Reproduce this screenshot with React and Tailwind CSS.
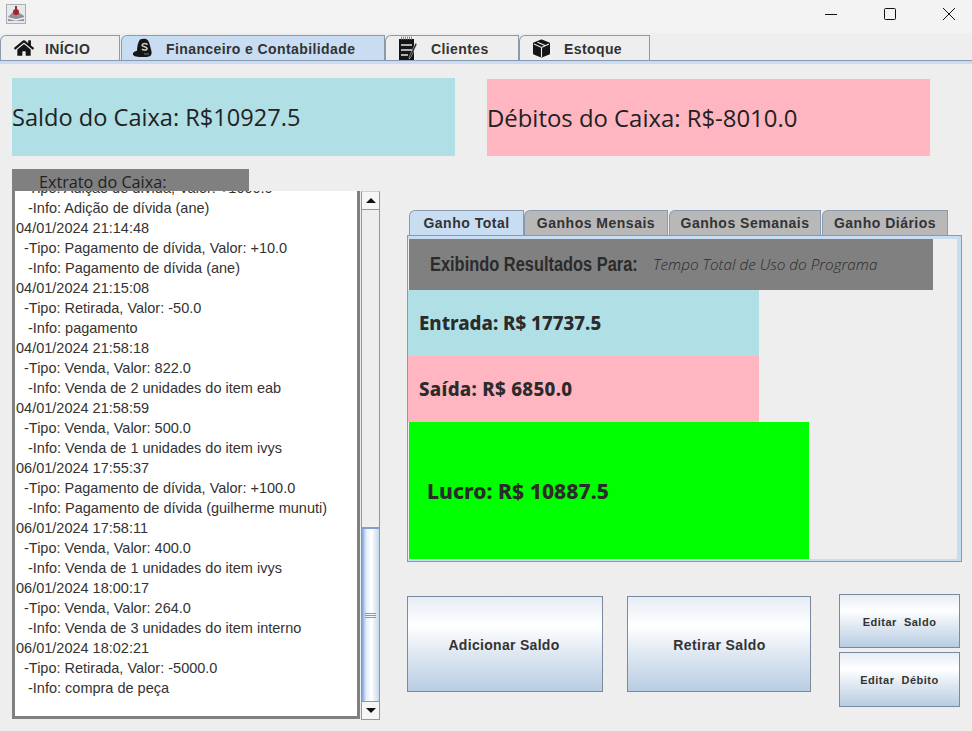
import React from "react";
import { FaHome } from "react-icons/fa";

const entries = [
  { date: "", tipo: "-Tipo: Adição de dívida, Valor: +1000.0", info: "-Info: Adição de dívida (ane)" },
  { date: "04/01/2024 21:14:48", tipo: "-Tipo: Pagamento de dívida, Valor: +10.0", info: "-Info: Pagamento de dívida (ane)" },
  { date: "04/01/2024 21:15:08", tipo: "-Tipo: Retirada, Valor: -50.0", info: "-Info: pagamento" },
  { date: "04/01/2024 21:58:18", tipo: "-Tipo: Venda, Valor: 822.0", info: "-Info: Venda de 2 unidades do item eab" },
  { date: "04/01/2024 21:58:59", tipo: "-Tipo: Venda, Valor: 500.0", info: "-Info: Venda de 1 unidades do item ivys" },
  { date: "06/01/2024 17:55:37", tipo: "-Tipo: Pagamento de dívida, Valor: +100.0", info: "-Info: Pagamento de dívida (guilherme munuti)" },
  { date: "06/01/2024 17:58:11", tipo: "-Tipo: Venda, Valor: 400.0", info: "-Info: Venda de 1 unidades do item ivys" },
  { date: "06/01/2024 18:00:17", tipo: "-Tipo: Venda, Valor: 264.0", info: "-Info: Venda de 3 unidades do item interno" },
  { date: "06/01/2024 18:02:21", tipo: "-Tipo: Retirada, Valor: -5000.0", info: "-Info: compra de peça" },
];

const metal = "bg-[linear-gradient(to_bottom,#e6edf5_0%,#ffffff_30%,#dfe8f2_60%,#b8cde3_100%)] border border-[#7a8a9e]";

function AppIcon() {
  return (
    <svg width="20" height="20" viewBox="0 0 20 20">
      <rect x="0.5" y="0.5" width="19" height="19" fill="#e8e8ea" stroke="#a9adb4" />
      <path d="M2 13 9 6l9 6v5H2z" fill="#8d929a" />
      <path d="M2 14l8 2 8-2" stroke="#f2f2f2" strokeWidth="1.5" fill="none" />
      <circle cx="10" cy="8" r="3" fill="#a8202c" />
      <rect x="9" y="2" width="2" height="4" fill="#7a3a40" />
    </svg>
  );
}

function BagIcon() {
  return (
    <svg width="22" height="20" viewBox="0 0 22 20">
      <path d="M8 1.5c3-1.5 7-1 8 1 2 3 2 6 3 9 1 3 1 6-2 7-3 .7-9 .7-13 0-3-.5-4-3-2-4.500 1-.7 2-1 3-1.200 0-4 1-9 3-11.300z" fill="#151515" />
      <path d="M10 7c1-2 5-2 5 0M10 7c0 2 5 1.500 5 3.500 0 2-4 2-5 .5" stroke="#c9c9c9" strokeWidth="1.600" fill="none" />
      <path d="M12 16h5" stroke="#777" strokeWidth="1" />
    </svg>
  );
}

function NoteIcon() {
  return (
    <svg width="20" height="25" viewBox="0 0 20 25">
      <rect x="1" y="3" width="15" height="21" fill="#151515" />
      <path d="M3 2h12" stroke="#8d8d8d" strokeDasharray="1 1" strokeWidth="3" />
      <path d="M3 9h11M3 14h11M3 19h7" stroke="#e4e4e4" strokeWidth="1.500" />
      <path d="M19 8l-6 13-2 2 .5-3 6-13z" fill="#151515" stroke="#eee" strokeWidth=".5" />
    </svg>
  );
}

function BoxIcon() {
  return (
    <svg width="19" height="19" viewBox="0 0 19 19">
      <path d="M9.500 1.500 17 4.500v10l-7.500 3-7.500-3v-10z" fill="#151515" stroke="#151515" strokeWidth="2" strokeLinejoin="round" />
      <path d="M2 5l7.500 3.500L17 5M9.500 8.500V18M5.500 3.200 13 6.500" stroke="#eee" strokeWidth="1.100" fill="none" />
    </svg>
  );
}

function Tab({ icon, label, active, className }) {
  return (
    <div
      className={`flex items-center h-[25px] border border-b-0 border-[#8a99ad] rounded-tl-[6px] text-[14px] font-bold tracking-[0.4px] text-[#333] ${active ? "bg-[#c8dcf2]" : "bg-[#eeeeee]"} ${className}`}
    >
      {icon}
      <span className="pt-[2px]">{label}</span>
    </div>
  );
}

function SubTab({ label, active, className }) {
  return (
    <div
      className={`flex items-center justify-center h-[25px] border border-b-0 border-[#8a99ad] rounded-tl-[6px] text-[14px] font-bold tracking-[0.5px] text-[#333] ${active ? "bg-[#c8dcf2]" : "bg-[#b8b8b8]"} ${className}`}
    >
      {label}
    </div>
  );
}

export default function App() {
  return (
    <div className="w-[972px] h-[731px] overflow-hidden bg-[#eeeeee] font-['Liberation_Sans',sans-serif] text-[#333]">
      {/* barra de titulo */}
      <div className="h-[33px] bg-[#f3f3f3] flex items-start justify-between">
        <div className="ml-[6px] mt-[4px]">
          <AppIcon />
        </div>
        <div className="flex mt-[6px] pr-[13px] gap-[39px] items-center">
          <svg width="20" height="16" viewBox="0 0 20 16"><path d="M4 8.500h12" stroke="#111" strokeWidth="1" /></svg>
          <svg width="20" height="16" viewBox="0 0 20 16"><rect x="4.500" y="2.500" width="11" height="11" rx="1" stroke="#111" strokeWidth="1" fill="none" /></svg>
          <svg width="20" height="16" viewBox="0 0 20 16"><path d="M4 2l12 12M16 2 4 14" stroke="#111" strokeWidth="1" /></svg>
        </div>
      </div>

      {/* abas principais */}
      <div className="h-[2px]" />
      <div className="flex items-end h-[25px] pl-0">
        <Tab className="w-[120px] pl-[13px] gap-[11px]" icon={<FaHome size={20} color="#151515" />} label="INÍCIO" />
        <Tab active className="w-[264px] ml-[1px] pl-[10px] gap-[12px]" icon={<BagIcon />} label="Financeiro e Contabilidade" />
        <Tab className="w-[134px] pl-[12px] gap-[13px]" icon={<NoteIcon />} label="Clientes" />
        <Tab className="w-[131px] pl-[12px] gap-[13px]" icon={<BoxIcon />} label="Estoque" />
      </div>
      <div className="h-[4px] bg-[#c8dcf2] border-t border-[#8a99ad]" />

      {/* saldos */}
      <div className="flex mt-[14px] pl-[12px]">
        <div className="w-[443px] h-[78px] pt-px bg-[#b0e0e6] flex items-center text-[23.6px] text-[#222] font-['Open_Sans',sans-serif]">Saldo do Caixa: R$10927.5</div>
        <div className="w-[443px] h-[77px] mt-[1px] ml-[32px] bg-[#ffb6c1] flex items-center text-[23.9px] text-[#222] font-['Open_Sans',sans-serif]">Débitos do Caixa: R$-8010.0</div>
      </div>

      <div className="flex mt-[13px] pl-[12px]">
        {/* extrato */}
        <div className="w-[368px] shrink-0">
          <div className="w-[237px] h-[22px] bg-[#808080] pl-[27px] text-[16.2px] font-medium leading-[26px] text-[#222] font-['Open_Sans',sans-serif] overflow-hidden">Extrato do Caixa:</div>
          <div className="flex h-[530px]">
            <div className="w-[348px] h-[528px] overflow-hidden bg-white border-[3px] border-t-0 border-[#808080]">
              <div className="mt-[-13px] pl-[1px] text-[14.5px] leading-[20px] text-[#333]">
                {entries.map((e, i) => (
                  <div key={i}>
                    {e.date && <div>{e.date}</div>}
                    <div className="pl-[8px]">{e.tipo}</div>
                    <div className="pl-[12px]">{e.info}</div>
                  </div>
                ))}
              </div>
            </div>
            <div className="ml-[1px] w-[19px] h-[529px] flex flex-col bg-[#eeeeee] border border-[#8a99ad] border-t-[#c8d4e2]">
              <div className="h-[18px] flex items-center justify-center bg-[#f6f6f6] border-b border-[#8a99ad]">
                <div className="w-0 h-0 border-x-[5px] border-x-transparent border-b-[5px] border-b-[#111]" />
              </div>
              <div className="flex-1" />
              <div className="h-[174px] flex flex-col items-center justify-center gap-[1px] bg-[linear-gradient(to_right,#7f9fd0_0%,#e4eefa_25%,#ffffff_55%,#c6d8ec_100%)] border-t-2 border-[#7f9fd0]">
                <div className="w-[11px] h-px bg-[#8a99ad]" />
                <div className="w-[11px] h-px bg-[#8a99ad]" />
                <div className="w-[11px] h-px bg-[#8a99ad]" />
              </div>
              <div className="h-[18px] flex items-center justify-center bg-[#f6f6f6] border-t border-[#8a99ad]">
                <div className="w-0 h-0 border-x-[5px] border-x-transparent border-t-[5px] border-t-[#111]" />
              </div>
            </div>
          </div>
        </div>

        {/* ganhos */}
        <div className="ml-[27px] flex-1 pt-[41px]">
          <div className="flex pl-[2px] h-[25px]">
            <SubTab active className="w-[115px]" label="Ganho Total" />
            <SubTab className="w-[144px]" label="Ganhos Mensais" />
            <SubTab className="w-[152px] ml-px" label="Ganhos Semanais" />
            <SubTab className="w-[126px] ml-px" label="Ganho Diários" />
          </div>
          <div className="w-[555px] h-[327px] border border-[#8a99ad] bg-[#c8dcf2]">
            <div className="h-[3px]" />
            <div className="w-[549px] h-[320px] bg-[#eeeeee]">
              <div className="w-[524px] h-[51px] ml-px bg-[#808080] flex items-center pl-[21px] text-[#2b2b2b]">
                <span className="inline-block w-[223px] shrink-0 whitespace-nowrap origin-left scale-x-[0.82] font-bold text-[20px] pb-[2px]">Exibindo Resultados Para:</span>
                <span className="italic font-light text-[15.3px] font-['Open_Sans',sans-serif]">Tempo Total de Uso do Programa</span>
              </div>
              <div className="w-[351px] h-[66px] bg-[#b0e0e6] flex items-center pl-[11px] text-[18.7px] font-extrabold font-['Noto_Sans',sans-serif] text-[#2b2b2b]">Entrada: R$ 17737.5</div>
              <div className="w-[351px] h-[66px] bg-[#ffb6c1] flex items-center pl-[11px] text-[18.7px] font-extrabold tracking-[0.3px] font-['Noto_Sans',sans-serif] text-[#2b2b2b]">Saída: R$ 6850.0</div>
              <div className="w-[400px] h-[137px] ml-px bg-[#00ff00] flex items-center pl-[18px] pt-[2px] text-[21px] font-extrabold tracking-[0.05px] font-['Noto_Sans',sans-serif] text-[#2b2b2b]">Lucro: R$ 10887.5</div>
            </div>
          </div>

          {/* botoes */}
          <div className="flex mt-[32px]">
            <div className="flex items-start pt-[2px]">
              <div className={`w-[196px] h-[96px] pt-[2px] pr-[2px] ${metal} flex items-center justify-center text-[14px] font-bold tracking-[0.3px]`}>Adicionar Saldo</div>
              <div className={`w-[184px] h-[96px] pt-[2px] pl-[1px] ml-[24px] ${metal} flex items-center justify-center text-[14px] font-bold tracking-[0.4px]`}>Retirar Saldo</div>
            </div>
            <div className="ml-[28px] flex flex-col gap-[4px]">
              <div className={`w-[121px] h-[54px] pt-[2px] ${metal} flex items-center justify-center text-[11px] font-bold tracking-[0.5px] whitespace-pre`}>Editar  Saldo</div>
              <div className={`w-[121px] h-[55px] pt-[2px] ${metal} flex items-center justify-center text-[11px] font-bold tracking-[0.5px] whitespace-pre`}>Editar  Débito</div>
            </div>
          </div>
        </div>
      </div>
    </div>
  );
}
